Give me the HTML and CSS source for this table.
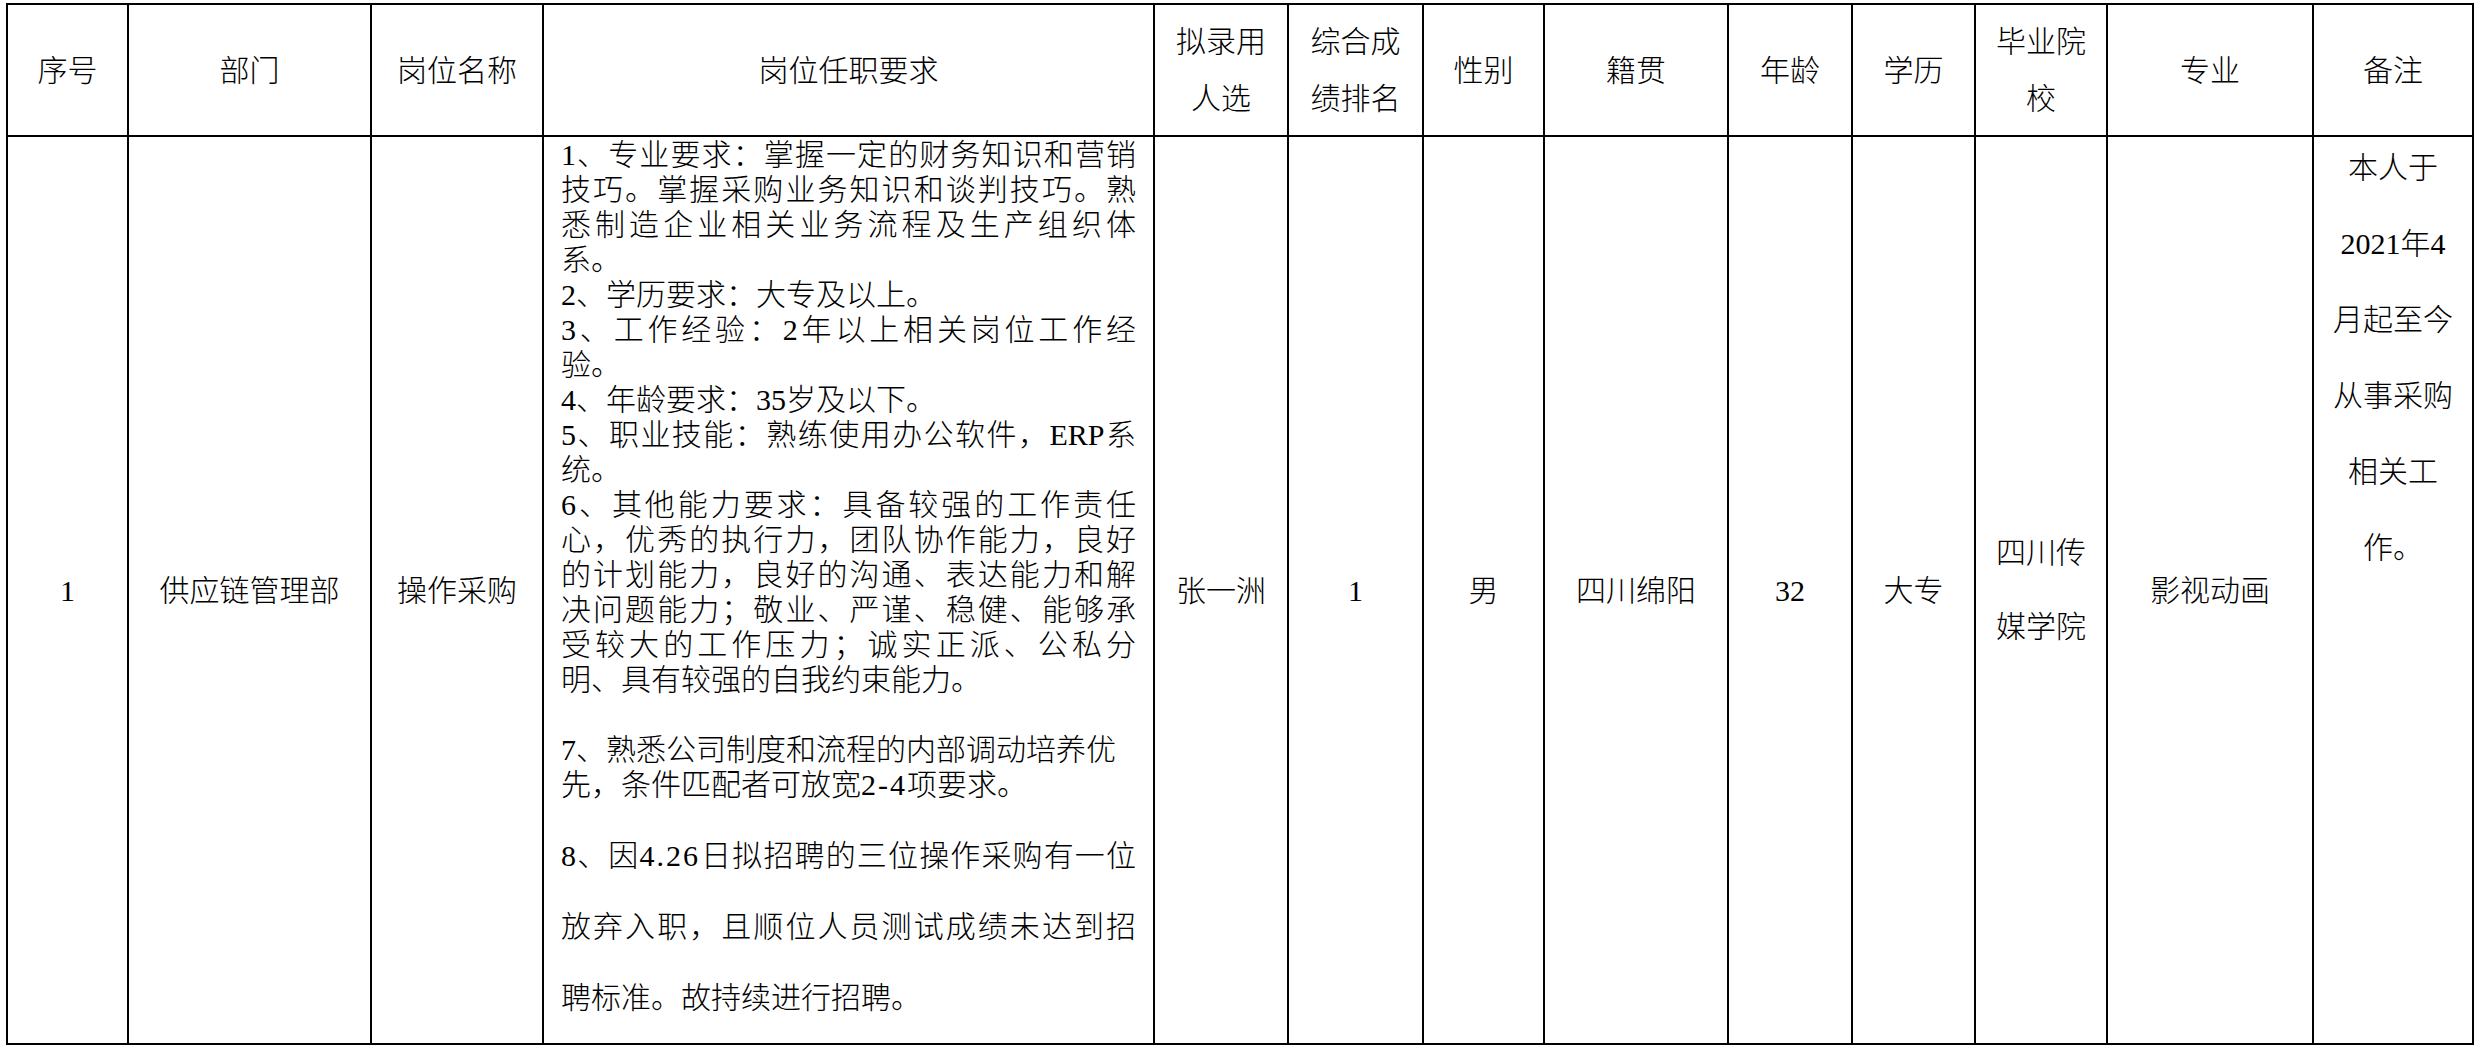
FILE: index.html
```html
<!DOCTYPE html>
<html lang="zh-CN">
<head>
<meta charset="utf-8">
<title>岗位任职要求</title>
<link rel="stylesheet" href="styles.css">
</head>
<body>
<table class="sheet">
  <colgroup>
    <col class="w-seq"><col class="w-dept"><col class="w-post"><col class="w-req"><col class="w-cand"><col class="w-rank"><col class="w-sex"><col class="w-home"><col class="w-age"><col class="w-edu"><col class="w-school"><col class="w-major"><col class="w-note">
  </colgroup>
  <thead>
    <tr class="head">
      <th>序号</th>
      <th>部门</th>
      <th>岗位名称</th>
      <th>岗位任职要求</th>
      <th class="two">拟录用<br>人选</th>
      <th class="two">综合成<br>绩排名</th>
      <th>性别</th>
      <th>籍贯</th>
      <th>年龄</th>
      <th>学历</th>
      <th class="two">毕业院<br>校</th>
      <th>专业</th>
      <th>备注</th>
    </tr>
  </thead>
  <tbody>
    <tr class="row">
      <td><span class="num">1</span></td>
      <td>供应链管理部</td>
      <td>操作采购</td>
      <td class="req">
        <div class="ln j"><span class="num">1</span>、专业要求：掌握一定的财务知识和营销</div>
        <div class="ln j">技巧。掌握采购业务知识和谈判技巧。熟</div>
        <div class="ln j">悉制造企业相关业务流程及生产组织体</div>
        <div class="ln">系。</div>
        <div class="ln"><span class="num">2</span>、学历要求：大专及以上。</div>
        <div class="ln j"><span class="num">3</span>、工作经验：<span class="num">2</span>年以上相关岗位工作经</div>
        <div class="ln">验。</div>
        <div class="ln"><span class="num">4</span>、年龄要求：<span class="num">35</span>岁及以下。</div>
        <div class="ln j"><span class="num">5</span>、职业技能：熟练使用办公软件，<span class="num">ERP</span>系</div>
        <div class="ln">统。</div>
        <div class="ln j"><span class="num">6</span>、其他能力要求：具备较强的工作责任</div>
        <div class="ln j">心，优秀的执行力，团队协作能力，良好</div>
        <div class="ln j">的计划能力，良好的沟通、表达能力和解</div>
        <div class="ln j">决问题能力；敬业、严谨、稳健、能够承</div>
        <div class="ln j">受较大的工作压力；诚实正派、公私分</div>
        <div class="ln">明、具有较强的自我约束能力。</div>
        <div class="item7">
          <div class="ln"><span class="num">7</span>、熟悉公司制度和流程的内部调动培养优</div>
          <div class="ln">先，条件匹配者可放宽<span class="num mono">2-4</span>项要求。</div>
        </div>
        <div class="item8">
          <div class="ln j"><span class="num">8</span>、因<span class="num mono">4.26</span>日拟招聘的三位操作采购有一位</div>
          <div class="ln j">放弃入职，且顺位人员测试成绩未达到招</div>
          <div class="ln">聘标准。故持续进行招聘。</div>
        </div>
      </td>
      <td>张一洲</td>
      <td><span class="num">1</span></td>
      <td>男</td>
      <td>四川绵阳</td>
      <td><span class="num">32</span></td>
      <td>大专</td>
      <td class="wide2">四川传<br>媒学院</td>
      <td>影视动画</td>
      <td class="note"><div class="note-text">本人于<br><span class="num">2021</span>年<span class="num">4</span><br>月起至今<br>从事采购<br>相关工<br>作。</div></td>
    </tr>
  </tbody>
</table>
</body>
</html>
```

FILE: styles.css
```css
html, body {
  background: #ffffff;
}
body {
  margin: 3px 0 0 6px;
  font-family: "Liberation Serif", "Noto Sans CJK SC", serif;
  font-size: 30px;
  font-weight: 300;
  color: #000000;
}
.sheet {
  border-collapse: collapse;
  table-layout: fixed;
  width: 2468px;
}
.w-seq { width: 121px; }
.w-dept { width: 243px; }
.w-post { width: 172px; }
.w-req { width: 611px; }
.w-cand { width: 134px; }
.w-rank { width: 135px; }
.w-sex { width: 121px; }
.w-home { width: 184px; }
.w-age { width: 124px; }
.w-edu { width: 123px; }
.w-school { width: 132px; }
.w-major { width: 206px; }
.w-note { width: 160px; }

.sheet th,
.sheet td {
  border: 2px solid #000000;
  padding: 0;
  text-align: center;
  vertical-align: middle;
  font-weight: 300;
  line-height: 35px;
  white-space: nowrap;
}
.num {
  font-weight: 400;
}
.mono {
  letter-spacing: 2px;
}
.head th {
  height: 130px;
}
.head th.two {
  line-height: 57px;
}
.row td {
  height: 906px;
}
.row td.wide2 {
  line-height: 74px;
}
.row td.note {
  vertical-align: top;
  padding-top: 0;
  line-height: 76px;
}
.note-text {
  margin-top: -7px;
}
.row td.req {
  vertical-align: top;
  text-align: left;
  padding: 0 17px 0 17px;
}
.ln {
  line-height: 35px;
  white-space: nowrap;
}
.ln.j {
  white-space: normal;
  text-align: justify;
  text-align-last: justify;
}
.item7 {
  margin-top: 35px;
}
.item8 {
  margin-top: 18px;
}
.item8 .ln {
  line-height: 71px;
}
```
